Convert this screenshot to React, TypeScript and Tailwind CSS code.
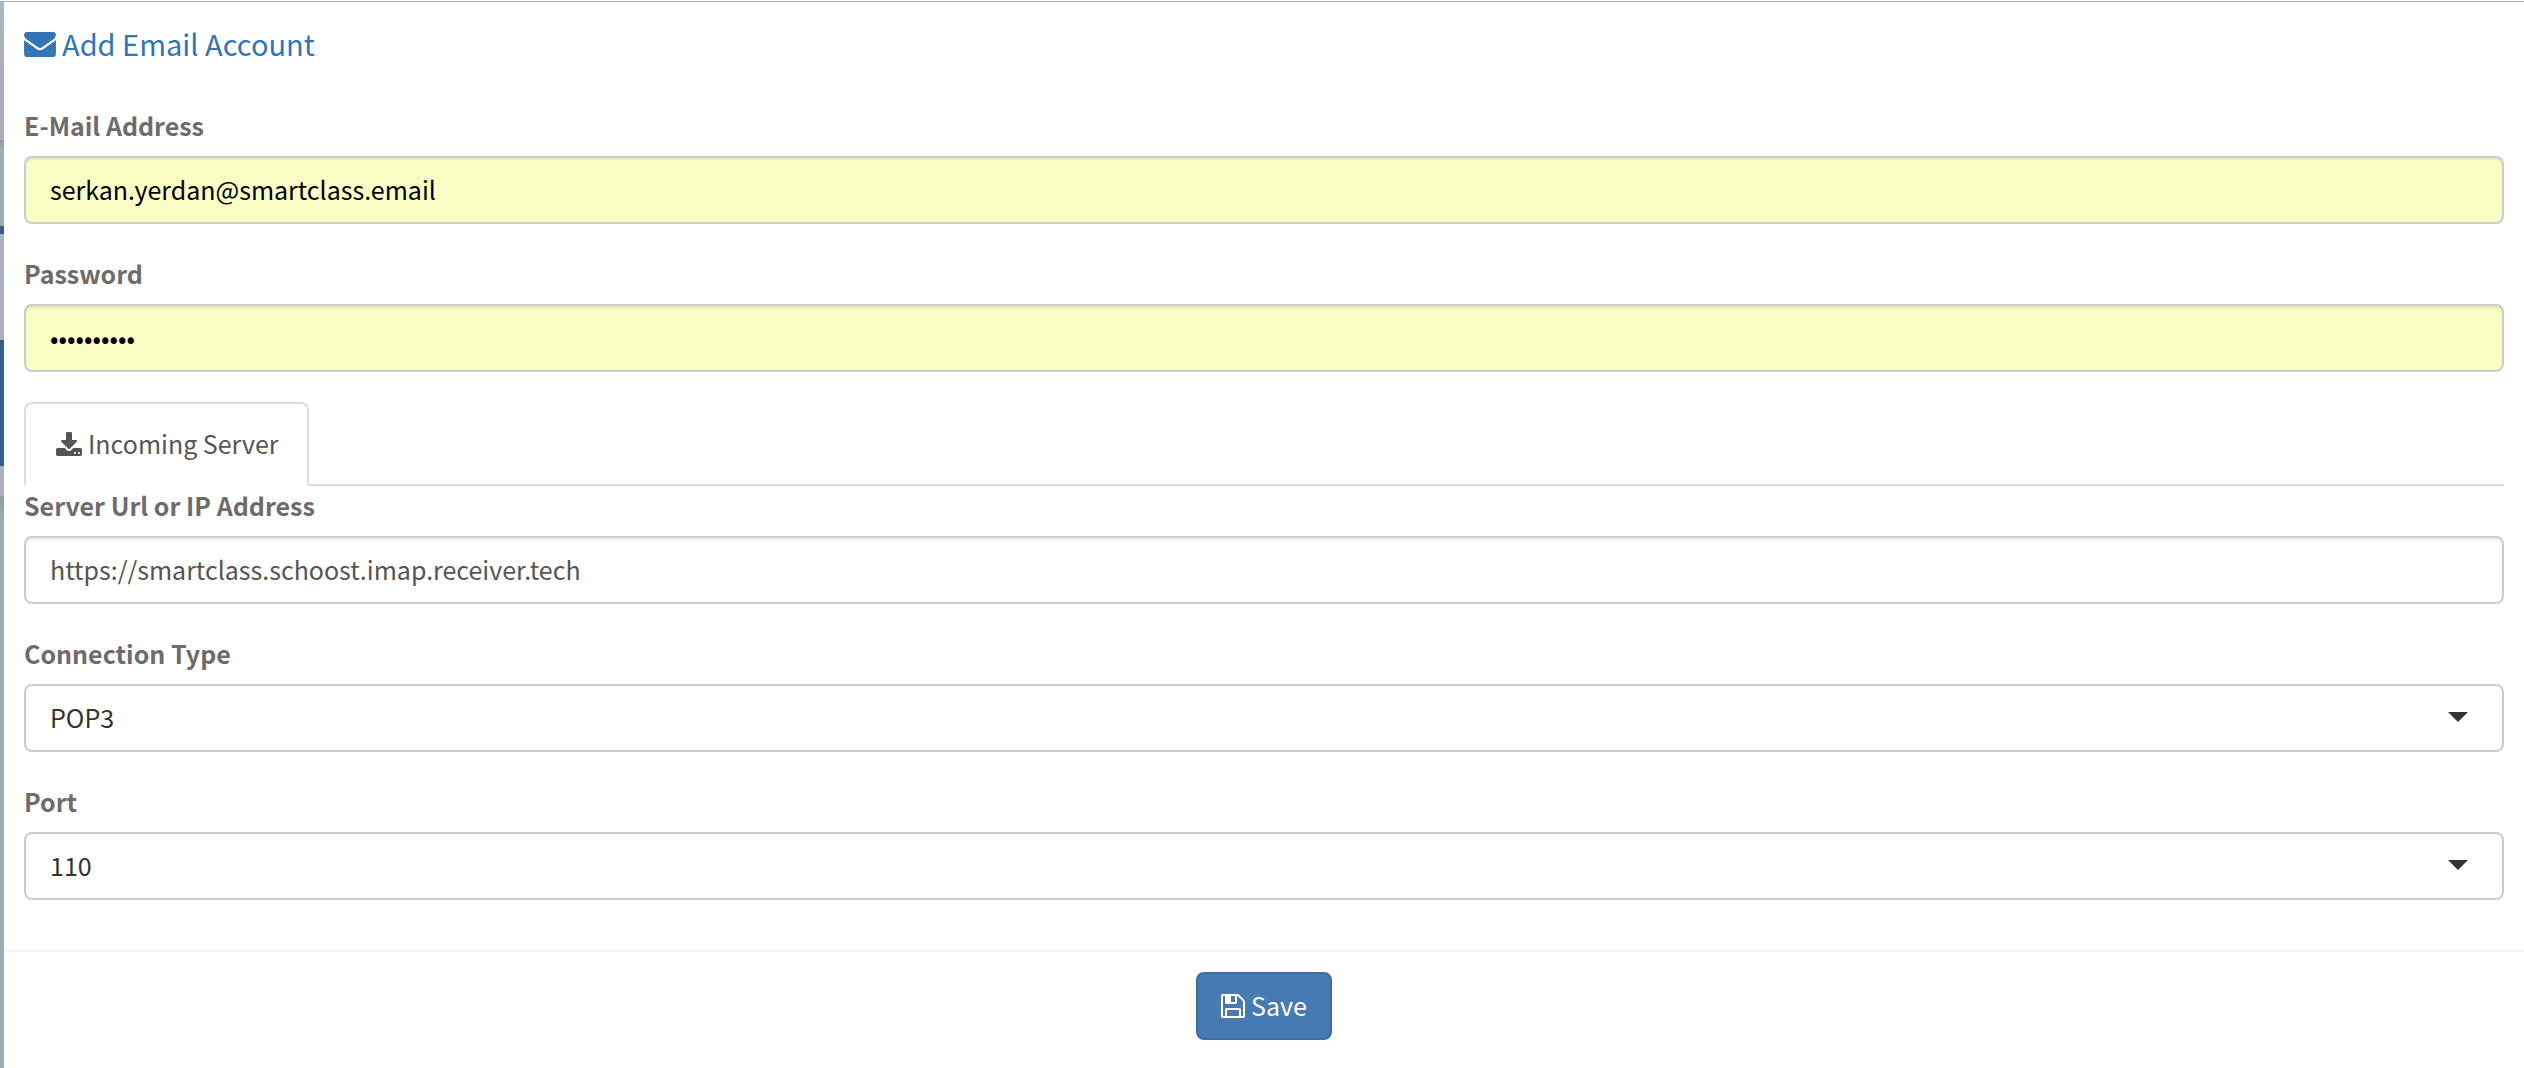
import { useId, useState } from 'react';
import type { ReactNode } from 'react';

interface IconProps {
  className?: string;
}

function EnvelopeIcon({ className }: IconProps) {
  return (
    <svg viewBox="0 256 1792 1408" fill="currentColor" className={className} aria-hidden="true">
      <path d="M1792 710v794q0 66-47 113t-113 47h-1472q-66 0-113-47t-47-113v-794q44 49 101 87 362 246 497 345 57 42 92.5 65.5t94.5 48 110 24.5h2q51 0 110-24.5t94.5-48 92.5-65.5q170-123 498-345 57-39 100-87zm0-294q0 79-49 151t-122 123q-376 261-468 325-10 7-42.5 31t-54 38.5-52 32.5-57.5 27-50 9h-2q-23 0-50-9t-57.5-27-52-32.5-54-38.5-42.5-31q-91-64-262-182.5t-205-142.5q-62-42-117-115.5t-55-136.5q0-78 41.5-130t118.5-52h1472q65 0 112.5 47t47.5 113z" />
    </svg>
  );
}

function DownloadIcon({ className }: IconProps) {
  return (
    <svg viewBox="64 0 1664 1536" fill="currentColor" className={className} aria-hidden="true">
      <path d="M1344 1344q0-26-19-45t-45-19-45 19-19 45 19 45 45 19 45-19 19-45zm256 0q0-26-19-45t-45-19-45 19-19 45 19 45 45 19 45-19 19-45zm128-224v320q0 40-28 68t-68 28h-1472q-40 0-68-28t-28-68v-320q0-40 28-68t68-28h465l135 136q58 56 136 56t136-56l136-136h464q40 0 68 28t28 68zm-325-569q17 41-14 70l-448 448q-18 19-45 19t-45-19l-448-448q-31-29-14-70 17-39 59-39h256v-448q0-26 19-45t45-19h256q26 0 45 19t19 45v448h256q42 0 59 39z" />
    </svg>
  );
}

function FloppyIcon({ className }: IconProps) {
  return (
    <svg viewBox="0 128 1536 1536" fill="currentColor" className={className} aria-hidden="true">
      <path d="M384 1536h768v-384h-768v384zm896 0h128v-896q0-14-10-38.5t-20-34.5l-281-281q-10-10-34-20t-39-10v416q0 40-28 68t-68 28h-576q-40 0-68-28t-28-68v-416h-128v1280h128v-416q0-40 28-68t68-28h832q40 0 68 28t28 68v416zm-384-928v-320q0-13-9.5-22.5t-22.5-9.5h-192q-13 0-22.5 9.5t-9.5 22.5v320q0 13 9.5 22.5t22.5 9.5h192q13 0 22.5-9.5t9.5-22.5zm640 32v928q0 40-28 68t-68 28h-1344q-40 0-68-28t-28-68v-1344q0-40 28-68t68-28h928q40 0 88 20t76 48l280 280q28 28 48 76t20 88z" />
    </svg>
  );
}

interface FieldProps {
  id: string;
  label: string;
  children: ReactNode;
}

function Field({ id, label, children }: FieldProps) {
  return (
    <div className="mb-[30px]">
      <label htmlFor={id} className="mb-3 block font-bold leading-[38px] text-[#706b6b]">
        {label}
      </label>
      {children}
    </div>
  );
}

interface TextFieldProps {
  label: string;
  type?: string;
  defaultValue: string;
  filled?: boolean;
}

function TextField({ label, type = 'text', defaultValue, filled = false }: TextFieldProps) {
  const id = useId();
  return (
    <Field id={id} label={label}>
      <input
        id={id}
        type={type}
        defaultValue={defaultValue}
        className={`block h-[68px] w-full rounded-lg border-2 border-[#ccc] px-6 pb-[2px] shadow-[inset_0_2px_2px_rgba(0,0,0,0.075)] outline-none ${
          filled ? 'bg-[#fafdc4] text-black' : 'bg-white text-[#555]'
        }`}
      />
    </Field>
  );
}

interface SelectFieldProps {
  label: string;
  options: string[];
}

function SelectField({ label, options }: SelectFieldProps) {
  const id = useId();
  return (
    <Field id={id} label={label}>
      <div className="relative">
        <select
          id={id}
          className="block h-[68px] w-full appearance-none rounded-lg border-2 border-[#ccc] bg-white px-6 text-[#333] outline-none"
        >
          {options.map((option) => (
            <option key={option}>{option}</option>
          ))}
        </select>
        <svg
          viewBox="0 0 20 10"
          className="pointer-events-none absolute right-9 top-7 h-[10px] w-5 text-[#333]"
          aria-hidden="true"
        >
          <path d="M0 0h20L10 10z" fill="currentColor" />
        </svg>
      </div>
    </Field>
  );
}

// Sliver of the dimmed page that shows beside the dialog
function Backdrop() {
  return (
    <div className="flex w-1 shrink-0 flex-col bg-[#a0a9b6]">
      <div className="h-[139px] bg-linear-to-b from-[#a9b7c4] to-[#a9b0bd] to-50%" />
      <div className="h-[86px] bg-linear-to-b from-[#8f98a1] to-[#9fa9b2] to-10%" />
      <div className="h-2 bg-[#365f8e]" />
      <div className="h-[106px] bg-[#abb1be]" />
      <div className="h-[126px] bg-[#325e8e]" />
      <div className="h-[30px] bg-[#abb2bf]" />
      <div className="h-5 bg-linear-to-b from-[#8f98a5] to-[#a0a9b6]" />
    </div>
  );
}

export default function App() {
  const [tab, setTab] = useState('incoming');

  return (
    <div className="flex min-h-screen bg-white pt-px font-['Noto_Sans_CJK_JP','Noto_Sans_CJK_SC',sans-serif] text-[25px]">
      <Backdrop />
      <form
        className="min-w-0 flex-1 border-t border-[#b3b3b3] bg-white"
        onSubmit={(e) => e.preventDefault()}
      >
        <div className="flex h-[84px] items-center px-5">
          <h4 className="flex items-center gap-[6px] text-[29px] text-[#3175b4]">
            <EnvelopeIcon className="h-[25px] w-8" />
            Add Email Account
          </h4>
        </div>

        <div className="px-5 py-5">
          <TextField label="E-Mail Address" type="email" defaultValue="serkan.yerdan@smartclass.email" filled />
          <TextField label="Password" type="password" defaultValue="smartclass" filled />

          <div role="tablist" className="flex border-b-2 border-[#ddd]">
            <button
              type="button"
              role="tab"
              aria-selected={tab === 'incoming'}
              onClick={() => setTab('incoming')}
              className="-mb-[2px] flex h-[84px] items-center gap-[6px] rounded-t-lg border-2 border-[#ddd] border-b-white bg-white pl-[30px] pr-7 text-[#555]"
            >
              <DownloadIcon className="h-6 w-[26px]" />
              Incoming Server
            </button>
          </div>

          <TextField label="Server Url or IP Address" defaultValue="https://smartclass.schoost.imap.receiver.tech" />
          <SelectField label="Connection Type" options={['POP3', 'IMAP']} />
          <SelectField label="Port" options={['110', '995', '143', '993']} />
        </div>

        <div className="flex justify-center border-t-2 border-[#f4f4f4] py-5">
          <button
            type="submit"
            className="flex h-[68px] items-center gap-[6px] rounded-lg border-2 border-[#3d6ca3] bg-[#467ab3] px-[23px] text-white"
          >
            <FloppyIcon className="size-6" />
            Save
          </button>
        </div>
      </form>
    </div>
  );
}
